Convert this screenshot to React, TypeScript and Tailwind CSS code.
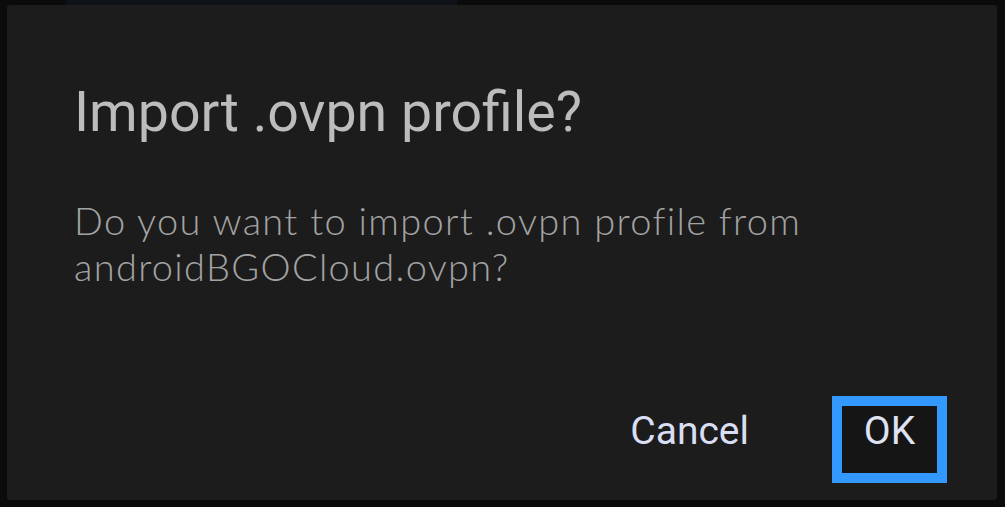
export default function App() {
  return (
    <div className="w-[1005px] h-[507px] bg-[#0b0b0b] overflow-hidden flex flex-col">
      <div className="h-[5px] flex">
        <div className="w-[67px]" />
        <div className="w-[390px] bg-[#10121a]" />
      </div>
      <div className="ml-[7px] w-[990px] h-[495px] bg-[#1c1c1c] rounded-[3px] flex flex-col pl-[67px] pr-[50px]">
        <h1 className="mt-[76px] text-[55.5px] leading-[64px] text-[#bcbcbc] font-['Roboto',sans-serif]">
          Import .ovpn profile?
        </h1>
        <p className="mt-[52px] text-[38px] leading-[46px] tracking-[1.3px] font-light text-[#a3a3a3] font-['Lato',sans-serif]">
          Do you want to import .ovpn profile from
          <br />
          androidBGOCloud.ovpn?
        </p>
        <div className="mt-auto mb-[17px] flex justify-end items-start gap-[83px] font-['Roboto',sans-serif]">
          <button className="mt-[11px] text-[39px] leading-[48px] text-[#d9def2]">Cancel</button>
          <button className="w-[115px] h-[87px] border-[10px] border-[#3399ff] bg-[#151515] flex justify-center items-start pt-[1px] text-[39px] leading-[48px] text-[#dfe3f2]">
            OK
          </button>
        </div>
      </div>
    </div>
  );
}
